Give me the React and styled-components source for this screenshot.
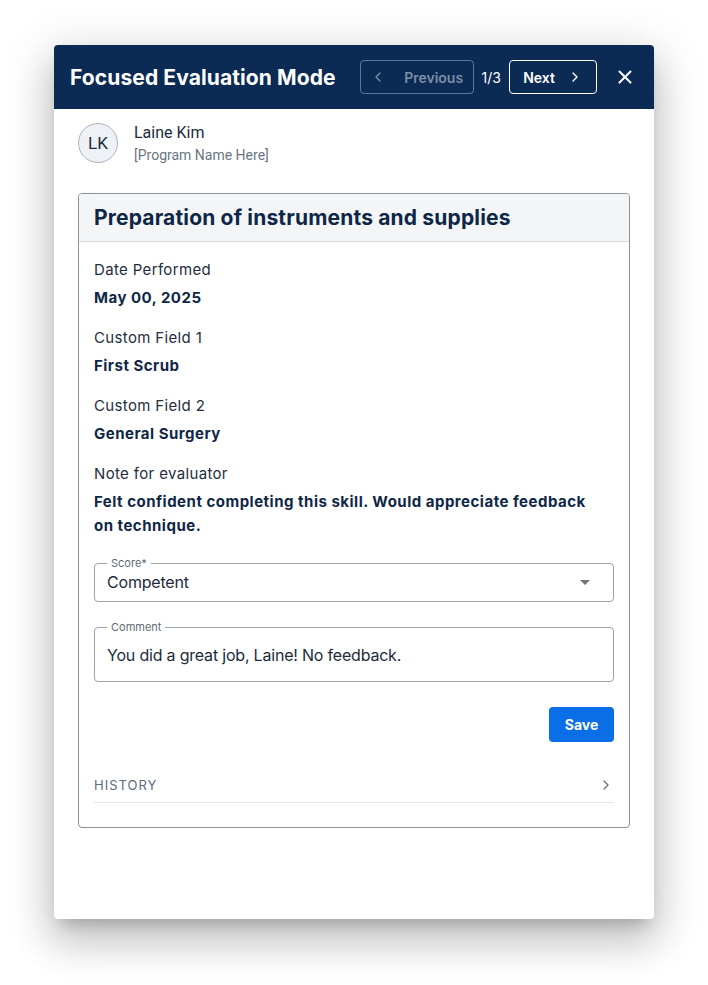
import styled, { createGlobalStyle } from "styled-components";
import { ChevronLeft, ChevronRight, X } from "lucide-react";

const GlobalStyle = createGlobalStyle`
  * { box-sizing: border-box; }
  body {
    margin: 0;
    background: #ffffff;
    font-family: "Inter", "Liberation Sans", sans-serif;
    color: #1d2b3b;
  }
`;

const Page = styled.div`
  min-height: 985px;
  padding-top: 45px;
  display: flex;
  justify-content: center;
  align-items: flex-start;
`;

const Dialog = styled.div`
  width: 600px;
  height: 874px;
  background: #ffffff;
  border-radius: 4px;
  overflow: hidden;
  box-shadow: 0 24px 38px 3px rgba(0, 0, 0, 0.14),
    0 9px 46px 8px rgba(0, 0, 0, 0.12), 0 11px 15px -7px rgba(0, 0, 0, 0.2);
`;

const Header = styled.div`
  height: 64px;
  background: #0b2a54;
  display: flex;
  align-items: center;
  padding: 0 18px 0 16px;
`;

const Title = styled.h1`
  flex: 1;
  margin: 0;
  font-size: 21px;
  font-weight: 700;
  letter-spacing: 0.1px;
  color: #ffffff;
`;

const Pager = styled.div`
  display: flex;
  align-items: center;
  gap: 8px;
`;

const NavButton = styled.button`
  height: 34px;
  width: ${(p) => p.$width}px;
  display: flex;
  align-items: center;
  justify-content: center;
  gap: ${(p) => p.$gap}px;
  border-radius: 4px;
  background: transparent;
  font-family: inherit;
  font-size: 14px;
  font-weight: 600;
  border: 1px solid
    ${(p) => (p.$disabled ? "rgba(160, 180, 205, 0.55)" : "#ffffff")};
  color: ${(p) => (p.$disabled ? "#7d8ea8" : "#ffffff")};
  padding: 0;
`;

const Count = styled.span`
  font-size: 14px;
  color: #ffffff;
`;

const CloseButton = styled.button`
  margin-left: 17px;
  background: none;
  border: none;
  padding: 0;
  color: #ffffff;
  display: flex;
`;

const Content = styled.div`
  padding: 14px 24px 0;
`;

const UserRow = styled.div`
  display: flex;
  align-items: flex-start;
  gap: 16px;
`;

const Avatar = styled.div`
  width: 40px;
  height: 40px;
  border-radius: 50%;
  background: #eef1f5;
  border: 1px solid #aab3bd;
  display: flex;
  align-items: center;
  justify-content: center;
  font-family: "Roboto", "Liberation Sans", sans-serif;
  font-size: 17px;
  color: #1d2b3b;
`;

const UserName = styled.div`
  font-family: "Roboto", "Liberation Sans", sans-serif;
  font-size: 16px;
  line-height: 20px;
  color: #1d2b3b;
`;

const ProgramName = styled.div`
  font-family: "Roboto", "Liberation Sans", sans-serif;
  font-size: 14px;
  line-height: 24px;
  color: #6b7684;
`;

const Card = styled.div`
  margin-top: 26px;
  border: 1px solid #8a9197;
  border-radius: 4px;
  overflow: hidden;
`;

const CardHeader = styled.div`
  height: 48px;
  background: #f3f5f7;
  border-bottom: 1px solid #d8dde2;
  display: flex;
  align-items: center;
  padding: 0 15px;
`;

const CardTitle = styled.h2`
  margin: 0;
  font-size: 21px;
  font-weight: 700;
  letter-spacing: 0.17px;
  color: #0f2747;
`;

const CardBody = styled.div`
  padding: 16px 15px 24px;
  display: flex;
  flex-direction: column;
`;

const InfoGroup = styled.div`
  display: flex;
  flex-direction: column;
  gap: 4px;
  margin-bottom: 16px;
`;

const InfoLabel = styled.div`
  font-size: 15px;
  line-height: 24px;
  letter-spacing: 0.35px;
  color: #1f2d3d;
`;

const InfoValue = styled.div`
  max-width: 512px;
  font-size: 15px;
  line-height: 24px;
  font-weight: 700;
  letter-spacing: 0.5px;
  color: #0f2747;
`;

const Field = styled.fieldset`
  margin: ${(p) => p.$mt}px 0 0;
  padding: ${(p) => (p.$tall ? "10px 12px 14px" : "1px 12px 7px")};
  border: 1px solid #9aa1a8;
  border-radius: 4px;
  min-width: 0;
`;

const Legend = styled.legend`
  padding: 0 4px;
  font-size: 11px;
  line-height: 12px;
  color: #5f6a75;
`;

const FieldValue = styled.div`
  display: flex;
  align-items: center;
  justify-content: space-between;
  font-size: 16px;
  line-height: 24px;
  letter-spacing: -0.2px;
  color: #1d2b3b;
`;

const Actions = styled.div`
  display: flex;
  justify-content: flex-end;
  margin-top: 25px;
`;

const SaveButton = styled.button`
  width: 65px;
  height: 35px;
  border: none;
  border-radius: 4px;
  background: #0a6fe6;
  color: #ffffff;
  font-family: inherit;
  font-size: 14px;
  font-weight: 700;
`;

const HistoryRow = styled.div`
  margin-top: 25px;
  height: 36px;
  display: flex;
  align-items: center;
  justify-content: space-between;
  border-bottom: 1px solid #e2e6ea;
  color: #5f6b77;
`;

const HistoryLabel = styled.span`
  font-size: 13px;
  letter-spacing: 1px;
  color: #5f6b77;
`;

const DropIcon = () => (
  <svg width="24" height="24" viewBox="0 0 24 24" style={{ marginRight: 4 }}>
    <path d="M7 10l5 5 5-5z" fill="#6f757b" />
  </svg>
);

const info = [
  ["Date Performed", "May 00, 2025"],
  ["Custom Field 1", "First Scrub"],
  ["Custom Field 2", "General Surgery"],
  [
    "Note for evaluator",
    "Felt confident completing this skill. Would appreciate feedback on technique.",
  ],
];

export default function App() {
  return (
    <Page>
      <GlobalStyle />
      <Dialog>
        <Header>
          <Title>Focused Evaluation Mode</Title>
          <Pager>
            <NavButton $disabled $width={114} $gap={18}>
              <ChevronLeft size={16} strokeWidth={2} />
              Previous
            </NavButton>
            <Count>1/3</Count>
            <NavButton $width={88} $gap={12}>
              Next
              <ChevronRight size={16} strokeWidth={2} />
            </NavButton>
          </Pager>
          <CloseButton>
            <X size={22} strokeWidth={2.2} />
          </CloseButton>
        </Header>
        <Content>
          <UserRow>
            <Avatar>LK</Avatar>
            <div>
              <UserName>Laine Kim</UserName>
              <ProgramName>[Program Name Here]</ProgramName>
            </div>
          </UserRow>
          <Card>
            <CardHeader>
              <CardTitle>Preparation of instruments and supplies</CardTitle>
            </CardHeader>
            <CardBody>
              {info.map(([label, value]) => (
                <InfoGroup key={label}>
                  <InfoLabel>{label}</InfoLabel>
                  <InfoValue>{value}</InfoValue>
                </InfoGroup>
              ))}
              <Field $mt={3}>
                <Legend>Score*</Legend>
                <FieldValue>
                  Competent
                  <DropIcon />
                </FieldValue>
              </Field>
              <Field $mt={19} $tall>
                <Legend>Comment</Legend>
                <FieldValue>You did a great job, Laine! No feedback.</FieldValue>
              </Field>
              <Actions>
                <SaveButton>Save</SaveButton>
              </Actions>
              <HistoryRow>
                <HistoryLabel>HISTORY</HistoryLabel>
                <ChevronRight size={16} strokeWidth={2} color="#6b7680" />
              </HistoryRow>
            </CardBody>
          </Card>
        </Content>
      </Dialog>
    </Page>
  );
}
